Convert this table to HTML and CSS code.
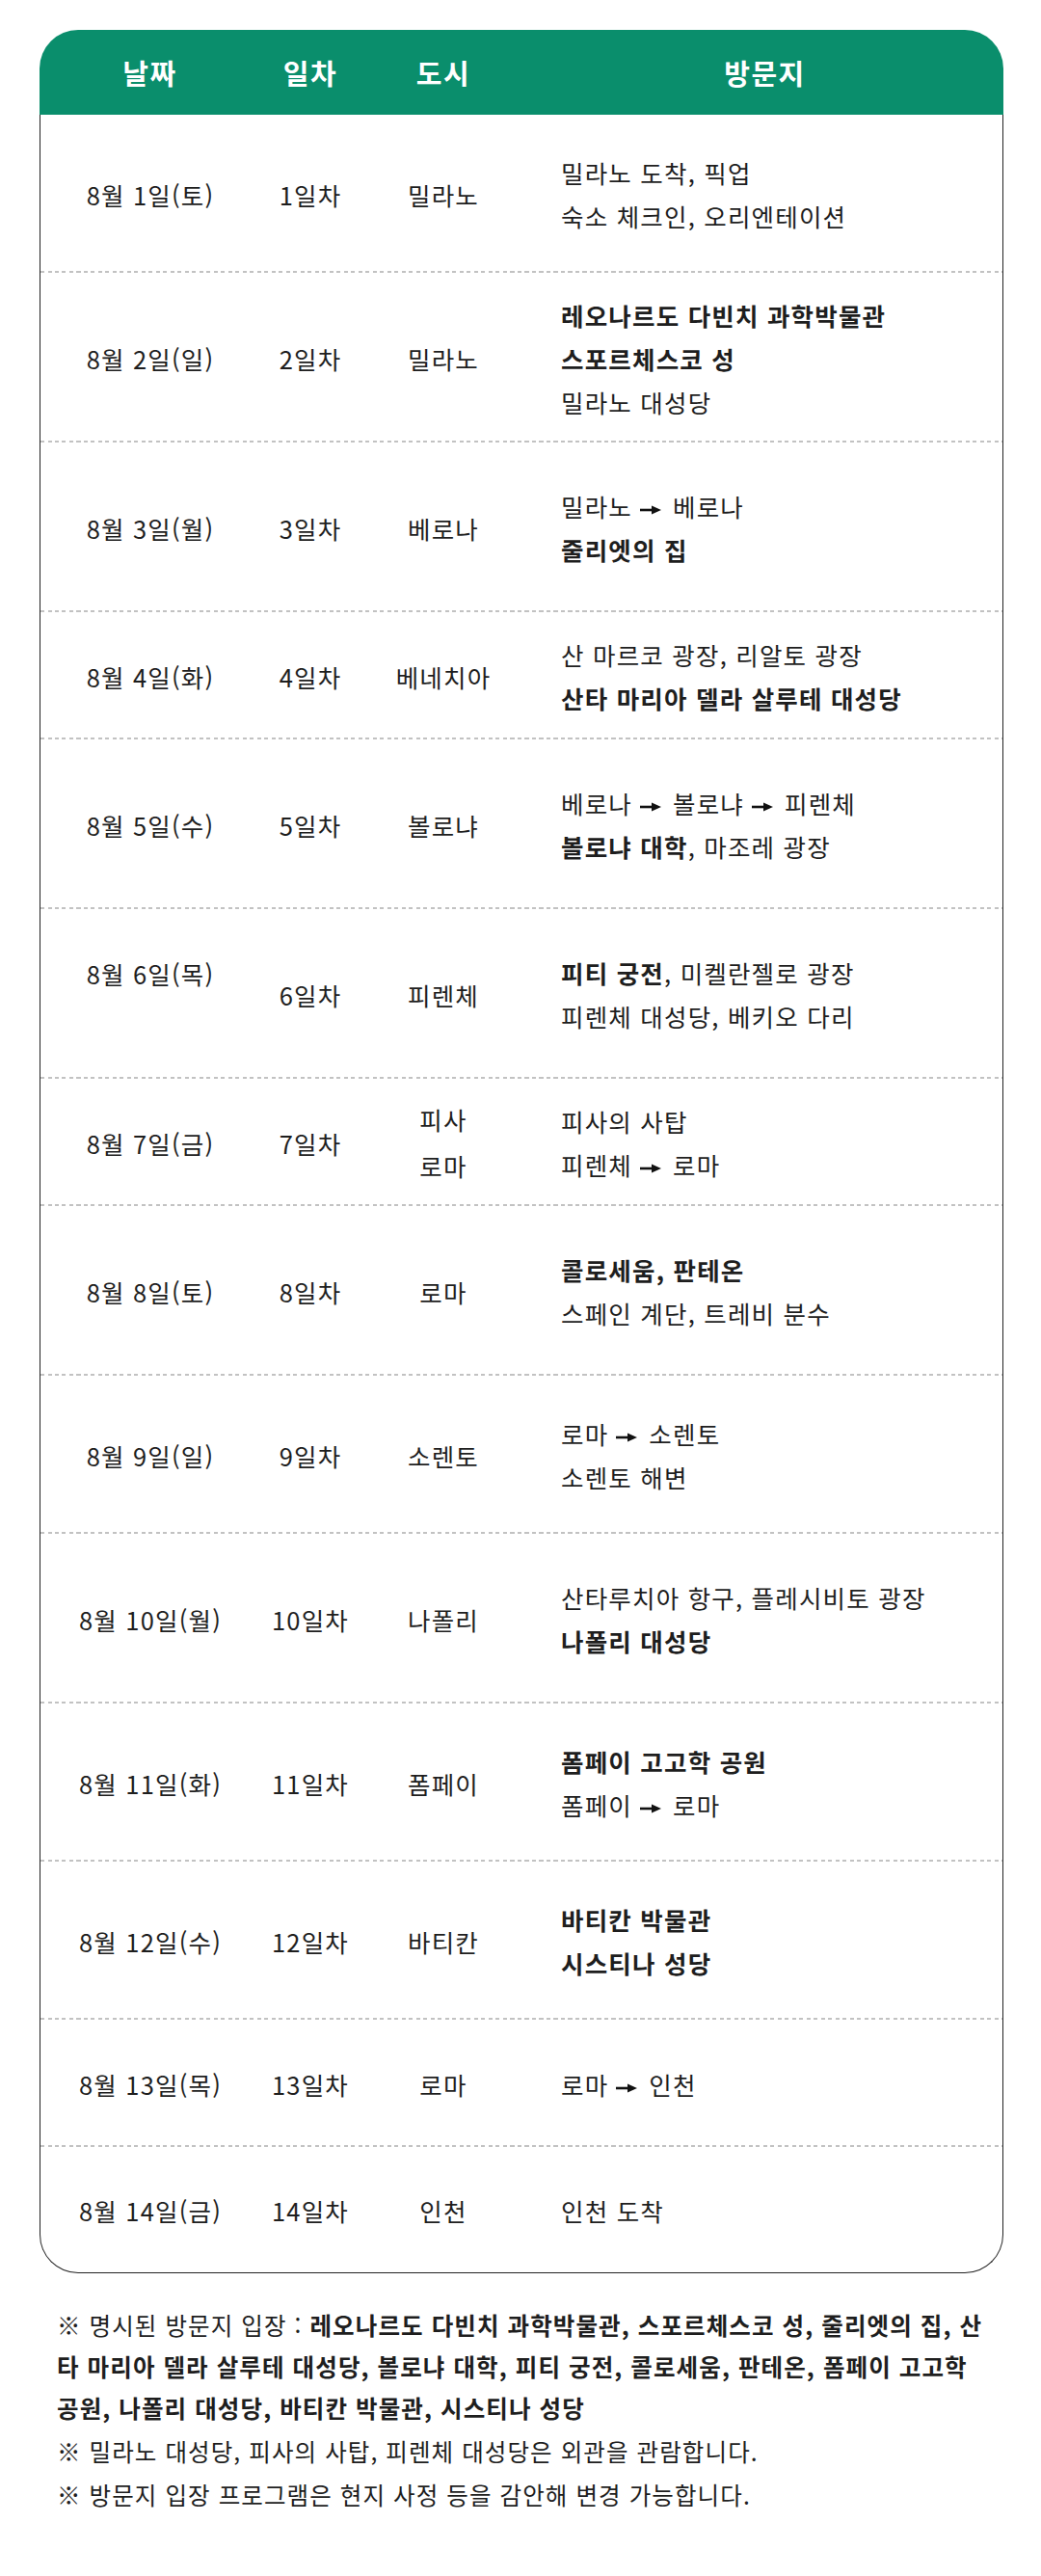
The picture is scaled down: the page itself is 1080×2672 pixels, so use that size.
FILE: index.html
```html
<!DOCTYPE html>
<html lang="ko">
<head>
<meta charset="utf-8">
<title>일정표</title>
<link rel="stylesheet" href="styles.css">
</head>
<body>
<div class="page">
  <div class="schedule">
    <div class="head">
      <div class="hc">날짜</div>
      <div class="hc">일차</div>
      <div class="hc">도시</div>
      <div class="hc">방문지</div>
    </div>
    <div class="body">
      <div class="row mid">
        <div class="c">8월 1일(토)</div><div class="c">1일차</div><div class="c">밀라노</div>
        <div class="v"><div>밀라노 도착, 픽업</div><div>숙소 체크인, 오리엔테이션</div></div>
      </div>
      <div class="row tall">
        <div class="c">8월 2일(일)</div><div class="c">2일차</div><div class="c">밀라노</div>
        <div class="v"><div><b>레오나르도 다빈치 과학박물관</b></div><div><b>스포르체스코 성</b></div><div>밀라노 대성당</div></div>
      </div>
      <div class="row tall">
        <div class="c">8월 3일(월)</div><div class="c">3일차</div><div class="c">베로나</div>
        <div class="v"><div>밀라노<span class="arr"><svg viewBox="0 0 22 12" width="22" height="12"><path d="M0 6h14" stroke="#111" stroke-width="2.6"/><path d="M12 1.5L22 6L12 10.5Z" fill="#111"/></svg></span>베로나</div><div><b>줄리엣의 집</b></div></div>
      </div>
      <div class="row short">
        <div class="c">8월 4일(화)</div><div class="c">4일차</div><div class="c">베네치아</div>
        <div class="v"><div>산 마르코 광장, 리알토 광장</div><div><b>산타 마리아 델라 살루테 대성당</b></div></div>
      </div>
      <div class="row tall">
        <div class="c">8월 5일(수)</div><div class="c">5일차</div><div class="c">볼로냐</div>
        <div class="v"><div>베로나<span class="arr"><svg viewBox="0 0 22 12" width="22" height="12"><path d="M0 6h14" stroke="#111" stroke-width="2.6"/><path d="M12 1.5L22 6L12 10.5Z" fill="#111"/></svg></span>볼로냐<span class="arr"><svg viewBox="0 0 22 12" width="22" height="12"><path d="M0 6h14" stroke="#111" stroke-width="2.6"/><path d="M12 1.5L22 6L12 10.5Z" fill="#111"/></svg></span>피렌체</div><div><b>볼로냐 대학</b>, 마조레 광장</div></div>
      </div>
      <div class="row tall">
        <div class="c up">8월 6일(목)</div><div class="c">6일차</div><div class="c">피렌체</div>
        <div class="v"><div><b>피티 궁전</b>, 미켈란젤로 광장</div><div>피렌체 대성당, 베키오 다리</div></div>
      </div>
      <div class="row short">
        <div class="c">8월 7일(금)</div><div class="c">7일차</div><div class="c two"><div>피사</div><div>로마</div></div>
        <div class="v"><div>피사의 사탑</div><div>피렌체<span class="arr"><svg viewBox="0 0 22 12" width="22" height="12"><path d="M0 6h14" stroke="#111" stroke-width="2.6"/><path d="M12 1.5L22 6L12 10.5Z" fill="#111"/></svg></span>로마</div></div>
      </div>
      <div class="row tall">
        <div class="c">8월 8일(토)</div><div class="c">8일차</div><div class="c">로마</div>
        <div class="v"><div><b>콜로세움, 판테온</b></div><div>스페인 계단, 트레비 분수</div></div>
      </div>
      <div class="row mid">
        <div class="c">8월 9일(일)</div><div class="c">9일차</div><div class="c">소렌토</div>
        <div class="v"><div>로마<span class="arr"><svg viewBox="0 0 22 12" width="22" height="12"><path d="M0 6h14" stroke="#111" stroke-width="2.6"/><path d="M12 1.5L22 6L12 10.5Z" fill="#111"/></svg></span>소렌토</div><div>소렌토 해변</div></div>
      </div>
      <div class="row tall">
        <div class="c">8월 10일(월)</div><div class="c">10일차</div><div class="c">나폴리</div>
        <div class="v"><div>산타루치아 항구, 플레시비토 광장</div><div><b>나폴리 대성당</b></div></div>
      </div>
      <div class="row mid">
        <div class="c">8월 11일(화)</div><div class="c">11일차</div><div class="c">폼페이</div>
        <div class="v"><div><b>폼페이 고고학 공원</b></div><div>폼페이<span class="arr"><svg viewBox="0 0 22 12" width="22" height="12"><path d="M0 6h14" stroke="#111" stroke-width="2.6"/><path d="M12 1.5L22 6L12 10.5Z" fill="#111"/></svg></span>로마</div></div>
      </div>
      <div class="row mid">
        <div class="c">8월 12일(수)</div><div class="c">12일차</div><div class="c">바티칸</div>
        <div class="v"><div><b>바티칸 박물관</b></div><div><b>시스티나 성당</b></div></div>
      </div>
      <div class="row short">
        <div class="c">8월 13일(목)</div><div class="c">13일차</div><div class="c">로마</div>
        <div class="v"><div>로마<span class="arr"><svg viewBox="0 0 22 12" width="22" height="12"><path d="M0 6h14" stroke="#111" stroke-width="2.6"/><path d="M12 1.5L22 6L12 10.5Z" fill="#111"/></svg></span>인천</div></div>
      </div>
      <div class="row last">
        <div class="c">8월 14일(금)</div><div class="c">14일차</div><div class="c">인천</div>
        <div class="v"><div>인천 도착</div></div>
      </div>
    </div>
  </div>
  <div class="notes">
    <p class="n1">※ 명시된 방문지 입장 : <b>레오나르도 다빈치 과학박물관, 스포르체스코 성, 줄리엣의 집, 산타 마리아 델라 살루테 대성당, 볼로냐 대학, 피티 궁전, 콜로세움, 판테온, 폼페이 고고학 공원, 나폴리 대성당, 바티칸 박물관, 시스티나 성당</b></p>
    <p>※ 밀라노 대성당, 피사의 사탑, 피렌체 대성당은 외관을 관람합니다.</p>
    <p>※ 방문지 입장 프로그램은 현지 사정 등을 감안해 변경 가능합니다.</p>
  </div>
</div>
</body>
</html>
```

FILE: styles.css
```css
* { box-sizing: border-box; }
html, body { margin: 0; padding: 0; background: #fff; }
body {
  font-family: "Noto Sans CJK KR", "Noto Sans", sans-serif;
  color: #1e1e1e;
}
.page {
  width: 1080px;
  padding: 31px 39px 0 41px;
}
.schedule { width: 1000px; }
.head {
  display: grid;
  grid-template-columns: 229px 104px 172px 1fr;
  height: 88px;
  background: #0a8e6c;
  border-radius: 40px 40px 0 0;
  align-items: center;
  color: #fff;
  font-size: 29px;
  letter-spacing: 1.5px;
  font-weight: 700;
}
.hc { text-align: center; }
.body {
  border: 1px solid #222;
  border-top: none;
  border-radius: 0 0 40px 40px;
}
.row {
  display: grid;
  grid-template-columns: 228px 104px 172px 1fr;
  align-items: center;
  font-size: 25.5px;
  letter-spacing: 1.2px;
  line-height: 45px;
  background: repeating-linear-gradient(90deg, #c2c2c2 0 4px, transparent 4px 7.5px) left bottom / 100% 2px no-repeat;
}
.row.last { background: none; }
.tall { height: 176px; }
.mid { height: 164px; }
.short { height: 132px; }
.last { height: 130px; }
.c { text-align: center; white-space: nowrap; }
.c.up { padding-bottom: 44px; }
.c.two { line-height: 48px; }
.v { padding-left: 36px; white-space: nowrap; }
.v b { font-weight: 700; }
.arr {
  display: inline-block;
  margin: 0 12px 0 8px;
  vertical-align: 1px;
}
.arr svg { display: block; }
.notes {
  margin-top: 32px;
  padding-left: 18px;
  width: 988px;
  font-size: 24.5px;
  letter-spacing: 1.1px;
  color: #1e1e1e;
}
.notes p { margin: 0; line-height: 45px; }
.notes p.n1 { line-height: 43px; margin-bottom: 1px; }
.notes b { font-weight: 700; }
```
